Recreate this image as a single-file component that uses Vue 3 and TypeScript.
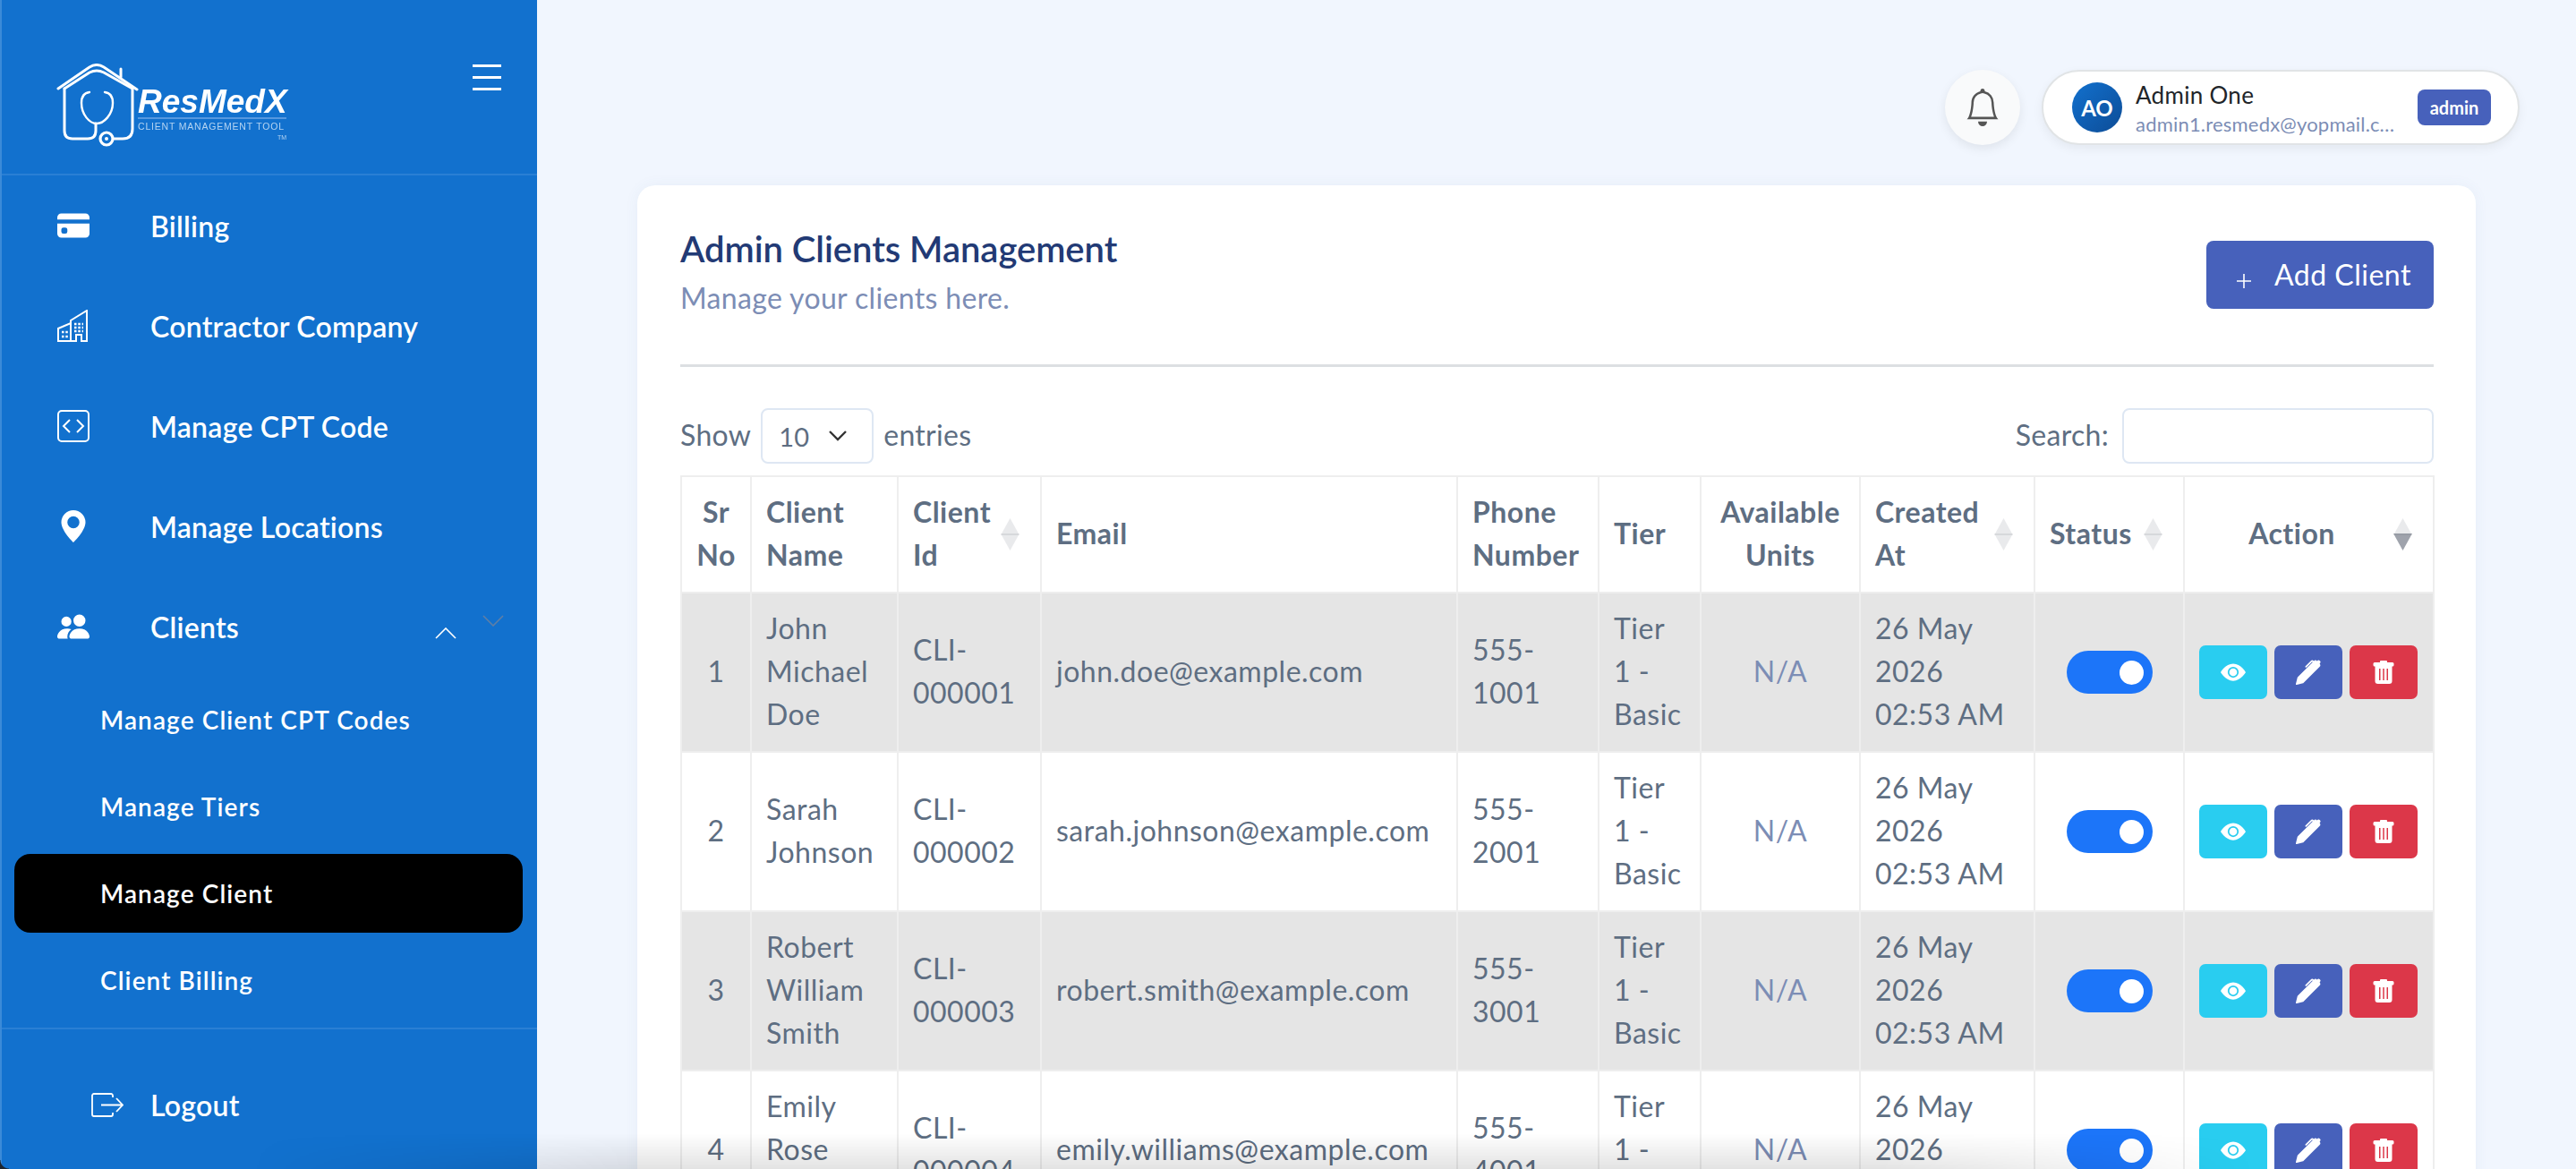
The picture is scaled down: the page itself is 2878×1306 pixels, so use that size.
<script setup lang="ts">
interface ClientRow {
  sr: number;
  name: string;
  id: string;
  email: string;
  phone: string;
}

const clients: ClientRow[] = [
  { sr: 1, name: 'John Michael Doe', id: 'CLI-000001', email: 'john.doe@example.com', phone: '555-1001' },
  { sr: 2, name: 'Sarah Johnson', id: 'CLI-000002', email: 'sarah.johnson@example.com', phone: '555-2001' },
  { sr: 3, name: 'Robert William Smith', id: 'CLI-000003', email: 'robert.smith@example.com', phone: '555-3001' },
  { sr: 4, name: 'Emily Rose Williams', id: 'CLI-000004', email: 'emily.williams@example.com', phone: '555-4001' },
];

const subItems = ['Manage Client CPT Codes', 'Manage Tiers', 'Manage Client', 'Client Billing'];
const columnWidths = [78, 164, 160, 465, 158, 114, 178, 195, 167, 279];
</script>

<template>
  <div class="page">
    <aside class="sidebar">
      <div class="brand">
        <svg class="logo" viewBox="0 0 270 104" width="270" height="104">
          <g fill="none" stroke="#fff" stroke-width="3" stroke-linecap="round" stroke-linejoin="round">
            <path d="M3 37 38 13q8-5 16 0l37 25" />
            <path d="M10 37 38 19q8-4 16 0l32 18" />
            <path d="M73 24V15" />
            <path d="M10 37v47q0 9 9 9h17q9 0 9-9V76" />
            <path d="M86 37v45q0 11-11 11H65" />
            <path d="M38 41Q29 42 29 53C29 66 38 76 46 76C54 76 64 66 64 53Q64 42 55 41" stroke-width="2.4" />
            <circle cx="57" cy="93" r="7" stroke-width="3.200" />
          </g>
          <circle cx="57" cy="93" r="2" fill="#fff" />
          <text x="92" y="64" class="logo-name">ResMedX</text>
          <path d="M92 70h166" stroke="#6ea6e4" stroke-width="1.5" />
          <text x="92" y="83" class="logo-sub">CLIENT MANAGEMENT TOOL</text>
          <text x="248" y="94" class="logo-tm">TM</text>
        </svg>
        <div class="hamburger"><span></span><span></span><span></span></div>
      </div>

      <nav class="menu">
        <a class="menu-item">
          <svg class="menu-icon" viewBox="0 0 16 16" width="36" height="36" fill="#fff">
            <path d="M0 4a2 2 0 0 1 2-2h12a2 2 0 0 1 2 2v1H0zm0 3v5a2 2 0 0 0 2 2h12a2 2 0 0 0 2-2V7zm3 2h1a1 1 0 0 1 1 1v1a1 1 0 0 1-1 1H3a1 1 0 0 1-1-1v-1a1 1 0 0 1 1-1" />
          </svg>
          Billing
        </a>
        <a class="menu-item">
          <svg class="menu-icon" viewBox="0 0 36 36" width="36" height="36" fill="none" stroke="#fff" stroke-width="2">
            <path d="M1 35V21l14-6V35z" />
            <path d="M15 35V12L33 1v34h-6v-7h-6v7z" />
            <path d="M5 25h7M5 30h7M19 16h10M19 20h10M19 24h10" stroke-width="2.5" stroke-dasharray="2.5 1.8" />
          </svg>
          Contractor Company
        </a>
        <a class="menu-item">
          <svg class="menu-icon" viewBox="0 0 36 36" width="36" height="36" fill="none" stroke="#fff" stroke-width="2">
            <rect x="1" y="1" width="34" height="34" rx="4" />
            <path d="M14 11l-7 7 7 7M22 11l7 7-7 7" />
          </svg>
          Manage CPT Code
        </a>
        <a class="menu-item">
          <svg class="menu-icon" viewBox="0 0 16 16" width="36" height="36" fill="#fff">
            <path d="M8 16s6-5.686 6-10A6 6 0 0 0 2 6c0 4.314 6 10 6 10m0-7a3 3 0 1 1 0-6 3 3 0 0 1 0 6" />
          </svg>
          Manage Locations
        </a>
        <a class="menu-item">
          <svg class="menu-icon" viewBox="0 0 16 16" width="36" height="36" fill="#fff">
            <path d="M7 14s-1 0-1-1 1-4 5-4 5 3 5 4-1 1-1 1zm4-6a3 3 0 1 0 0-6 3 3 0 0 0 0 6m-5.784 6A2.24 2.24 0 0 1 5 13c0-1.355.68-2.75 1.936-3.72A6.3 6.3 0 0 0 5 9c-4 0-5 3-5 4s1 1 1 1zM4.5 8a2.5 2.5 0 1 0 0-5 2.5 2.5 0 0 0 0 5" />
          </svg>
          Clients
          <svg class="chevron-up" viewBox="0 0 24 13" width="24" height="13" fill="none" stroke="#fff" stroke-width="1.6">
            <path d="M1 12 12 1l11 11" />
          </svg>
          <svg class="chevron-down" viewBox="0 0 24 13" width="24" height="13" fill="none" stroke="#5f7fa6" stroke-width="1.6">
            <path d="M1 1l11 11L23 1" />
          </svg>
        </a>
        <div class="submenu">
          <a v-for="item in subItems" :key="item" class="sub-item" :class="{ active: item === 'Manage Client' }">{{ item }}</a>
        </div>
      </nav>

      <div class="logout">
        <svg class="logout-icon" viewBox="0 0 36 27" width="36" height="27" fill="none" stroke="#fff" stroke-width="1.8">
          <path d="M24 5V3a2 2 0 0 0-2-2H3a2 2 0 0 0-2 2v21a2 2 0 0 0 2 2h19a2 2 0 0 0 2-2v-2" />
          <path d="M11 13.5h24M28 6l7 7.500-7 7.500" />
        </svg>
        Logout
      </div>
    </aside>

    <main class="main">
      <header class="topbar">
        <div class="bell">
          <svg viewBox="0 0 16 16" width="40" height="42" fill="#555" preserveAspectRatio="none">
            <path d="M8 16a2 2 0 0 0 2-2H6a2 2 0 0 0 2 2M8 1.918l-.797.161A4 4 0 0 0 4 6c0 .628-.134 2.197-.459 3.742-.16.767-.376 1.566-.663 2.258h10.244c-.287-.692-.502-1.49-.663-2.258C12.134 8.197 12 6.628 12 6a4 4 0 0 0-3.203-3.92zM14.22 12c.223.447.481.801.78 1H1c.299-.199.557-.553.78-1C2.68 10.2 3 6.88 3 6c0-2.42 1.72-4.44 4.005-4.901a1 1 0 1 1 1.99 0A5 5 0 0 1 13 6c0 .88.32 4.2 1.22 6" />
          </svg>
        </div>
        <div class="user-pill">
          <div class="avatar">AO</div>
          <div class="user-info">
            <div class="user-name">Admin One</div>
            <div class="user-email">admin1.resmedx@yopmail.com</div>
          </div>
          <span class="role-badge">admin</span>
        </div>
      </header>

      <section class="card">
        <div class="card-head">
          <div>
            <h1 class="card-title">Admin Clients Management</h1>
            <p class="card-sub">Manage your clients here.</p>
          </div>
          <button class="add-btn">
            <svg viewBox="0 0 16 16" width="16" height="16" fill="none" stroke="#fff" stroke-width="1.6">
              <path d="M8 0v16M0 8h16" />
            </svg>
            Add Client
          </button>
        </div>

        <div class="table-controls">
          <div class="entries">
            Show
            <div class="entries-select">
              10
              <svg viewBox="0 0 20 12" width="20" height="12" fill="none" stroke="#333" stroke-width="2.4">
                <path d="M1 1l9 9 9-9" />
              </svg>
            </div>
            entries
          </div>
          <label class="search">
            Search:
            <input type="text" />
          </label>
        </div>

        <table class="clients-table">
          <colgroup>
            <col v-for="(w, i) in columnWidths" :key="i" :style="{ width: w + 'px' }" />
          </colgroup>
          <thead>
            <tr>
              <th class="center">Sr No</th>
              <th>Client Name</th>
              <th class="sortable">Client Id<i class="sort"></i></th>
              <th>Email</th>
              <th>Phone Number</th>
              <th>Tier</th>
              <th class="center">Available Units</th>
              <th class="sortable">Created At<i class="sort"></i></th>
              <th class="sortable">Status<i class="sort"></i></th>
              <th class="sortable action-head">Action<i class="sort sort-desc"></i></th>
            </tr>
          </thead>
          <tbody>
            <tr v-for="c in clients" :key="c.sr">
              <td class="center">{{ c.sr }}</td>
              <td>{{ c.name }}</td>
              <td>{{ c.id }}</td>
              <td>{{ c.email }}</td>
              <td>{{ c.phone }}</td>
              <td>Tier 1 - Basic</td>
              <td class="center na">N/A</td>
              <td>26 May 2026 02:53 AM</td>
              <td class="control-cell">
                <div class="toggle"><span></span></div>
              </td>
              <td class="control-cell">
                <div class="actions">
                  <button class="act act-view">
                    <svg viewBox="0 0 16 16" width="28" height="28" fill="#fff">
                      <path d="M10.500 8a2.500 2.500 0 1 1-5 0 2.500 2.500 0 0 1 5 0" />
                      <path d="M0 8s3-5.500 8-5.500S16 8 16 8s-3 5.500-8 5.500S0 8 0 8m8 3.500a3.500 3.500 0 1 0 0-7 3.500 3.500 0 0 0 0 7" />
                    </svg>
                  </button>
                  <button class="act act-edit">
                    <svg viewBox="0 0 16 16" width="28" height="28" fill="#fff">
                      <path d="m13.498.795.149-.149a1.207 1.207 0 1 1 1.707 1.708l-.149.148a1.5 1.5 0 0 1-.059 2.059L4.854 14.854a.5.5 0 0 1-.233.131l-4 1a.5.5 0 0 1-.606-.606l1-4a.5.5 0 0 1 .131-.232l9.642-9.642a.5.5 0 0 0-.642.056L6.854 4.854a.5.5 0 1 1-.708-.708L9.440.854A1.500 1.500 0 0 1 11.500.796a1.500 1.500 0 0 1 1.998-.001" />
                    </svg>
                  </button>
                  <button class="act act-delete">
                    <svg viewBox="0 0 24 26" width="24" height="26" fill="#fff">
                      <path fill-rule="evenodd" d="M9 0h6a1 1 0 0 1 1 1v1h6a1.500 1.500 0 0 1 1.500 1.500V5a1.500 1.500 0 0 1-1.500 1.500h-.5V23a3 3 0 0 1-3 3H5.500a3 3 0 0 1-3-3V6.500H2A1.500 1.500 0 0 1 .5 5V3.500A1.500 1.500 0 0 1 2 2h6V1a1 1 0 0 1 1-1zM7 9v13h1.500V9zm4.250 0v13h1.500V9zM15.500 9v13H17V9z" />
                    </svg>
                  </button>
                </div>
              </td>
            </tr>
          </tbody>
        </table>
      </section>
    </main>

    <div class="bottom-shade"></div>
    <div class="window-corner"></div>
  </div>
</template>

<style scoped>
.page {
  position: relative;
  display: flex;
  height: 1306px;
  overflow: hidden;
  background: #f1f6fe;
  font-family: Lato, "Noto Sans", sans-serif;
  color: #5e6e82;
}

.sidebar {
  flex: 0 0 600px;
  box-sizing: border-box;
  display: flex;
  flex-direction: column;
  background: #1271ce;
  border-left: 2px solid #3b8ad8;
  color: #fff;
}

.brand {
  height: 196px;
  box-sizing: border-box;
  position: relative;
  padding: 62px 0 0 60px;
  border-bottom: 2px solid #2a7fd4;
}

.logo {
  display: block;
  filter: blur(0.4px);
}

.logo-name {
  font-family: "Liberation Sans", sans-serif;
  font-weight: 700;
  font-style: italic;
  font-size: 37px;
  fill: #fff;
}

.logo-sub {
  font-family: "Liberation Sans", sans-serif;
  font-size: 10.500px;
  letter-spacing: 0.8px;
  fill: #b5d4f2;
}

.logo-tm {
  font-family: "Liberation Sans", sans-serif;
  font-size: 7px;
  fill: #b5d4f2;
}

.hamburger {
  position: absolute;
  top: 72px;
  right: 40px;
  width: 32px;
  display: flex;
  flex-direction: column;
  gap: 10px;
}

.hamburger span {
  display: block;
  height: 3px;
  background: #fff;
}

.menu-item {
  position: relative;
  height: 112px;
  display: flex;
  align-items: center;
  padding-left: 62px;
  font-size: 32px;
  font-weight: 600;
  letter-spacing: 0.25px;
}

.menu-icon {
  margin-right: 68px;
  flex: none;
}

.chevron-up {
  position: absolute;
  left: 484px;
  top: 57px;
}

.chevron-down {
  position: absolute;
  left: 537px;
  top: 43px;
}

.submenu {
  display: flex;
  flex-direction: column;
  padding-bottom: 4px;
  border-bottom: 2px solid #2a7fd4;
}

.sub-item {
  height: 88px;
  margin: 4px 16px 5px 14px;
  padding-left: 96px;
  display: flex;
  align-items: center;
  font-size: 28px;
  font-weight: 600;
  letter-spacing: 1.1px;
  border-radius: 18px;
}

.sub-item.active {
  background: #000;
}

.logout {
  display: flex;
  align-items: center;
  padding: 65px 0 0 100px;
  font-size: 32px;
  font-weight: 600;
  letter-spacing: 0.25px;
}

.logout-icon {
  margin-right: 30px;
}

.main {
  flex: 1;
  min-width: 0;
}

.topbar {
  display: flex;
  justify-content: flex-end;
  gap: 24px;
  padding: 78px 63px 0 0;
}

.bell {
  width: 84px;
  height: 84px;
  display: flex;
  align-items: center;
  justify-content: center;
  border-radius: 50%;
  background: #f9fafb;
  box-shadow: 0 4px 12px rgba(0, 0, 0, 0.08);
}

.user-pill {
  width: 534px;
  height: 84px;
  box-sizing: border-box;
  display: flex;
  align-items: center;
  padding: 0 32px;
  background: #fff;
  border: 2px solid #e1e4e6;
  border-radius: 42px;
  box-shadow: 0 4px 12px rgba(0, 0, 0, 0.06);
}

.avatar {
  flex: none;
  width: 56px;
  height: 56px;
  display: flex;
  align-items: center;
  justify-content: center;
  border-radius: 50%;
  background: linear-gradient(135deg, #1271ce, #0d4c96);
  color: #fff;
  font-size: 24px;
  font-weight: 700;
}

.user-info {
  width: 292px;
  margin-left: 15px;
}

.user-name {
  padding-top: 2px;
  font-size: 26px;
  line-height: 35px;
  letter-spacing: 0.3px;
  color: #212529;
}

.user-email {
  font-size: 22px;
  line-height: 29px;
  letter-spacing: 0.2px;
  color: #7c8db5;
  white-space: nowrap;
  overflow: hidden;
  text-overflow: ellipsis;
}

.role-badge {
  margin-left: 23px;
  flex: none;
  width: 82px;
  height: 40px;
  display: flex;
  align-items: center;
  justify-content: center;
  border-radius: 8px;
  background: #4761bb;
  color: #fff;
  font-size: 20px;
  font-weight: 700;
}

.card {
  margin: 45px 112px 0;
  padding: 47px 47px 0 48px;
  background: #fff;
  border-radius: 20px;
  box-shadow: 0 0 16px rgba(70, 100, 160, 0.06);
}

.card-head {
  display: flex;
  justify-content: space-between;
  align-items: flex-start;
  padding-bottom: 50px;
  border-bottom: 3px solid #dcdfe2;
}

.card-title {
  margin: 0 0 7px;
  font-size: 40px;
  line-height: 48px;
  font-weight: 600;
  letter-spacing: -0.05px;
  color: #223a75;
}

.card-sub {
  margin: 0;
  font-size: 32px;
  line-height: 48px;
  letter-spacing: 0.35px;
  color: #7c8db5;
}

.add-btn {
  margin-top: 15px;
  width: 254px;
  height: 76px;
  display: flex;
  align-items: center;
  gap: 26px;
  padding: 0 0 0 34px;
  border: none;
  border-radius: 8px;
  background: #4761bb;
  color: #fff;
  font: inherit;
  font-size: 32px;
  line-height: 44px;
  letter-spacing: 0.5px;
}

.add-btn svg {
  margin-top: 14px;
}

.table-controls {
  display: flex;
  justify-content: space-between;
  align-items: center;
  margin: 42px 0 13px;
  font-size: 32px;
  letter-spacing: 0.3px;
}

.entries,
.search {
  display: flex;
  align-items: center;
  gap: 11px;
}

.entries-select {
  width: 126px;
  height: 62px;
  margin-top: 4px;
  box-sizing: border-box;
  display: flex;
  align-items: center;
  justify-content: space-between;
  padding: 0 28px 0 18px;
  border: 2px solid #dee7f3;
  border-radius: 8px;
  font-size: 29px;
}

.search {
  gap: 15px;
}

.search input {
  width: 348px;
  height: 62px;
  margin-top: 4px;
  box-sizing: border-box;
  border: 2px solid #dee7f3;
  border-radius: 8px;
  background: #fff;
}

.clients-table {
  width: 1958px;
  table-layout: fixed;
  border-collapse: collapse;
  font-size: 32px;
  line-height: 48px;
  letter-spacing: 0.5px;
}

.clients-table th,
.clients-table td {
  padding: 15px 16px 17px;
  border: 2px solid #eeeeee;
  text-align: left;
  vertical-align: middle;
}

.clients-table .control-cell {
  padding: 16px;
}

.clients-table th {
  position: relative;
  font-weight: 700;
  letter-spacing: 0.5px;
  background: #fff;
}

.clients-table tbody tr:nth-child(odd) td {
  background: #e5e5e5;
}

.clients-table tbody tr:nth-child(even) td {
  background: #fff;
}

.clients-table .center {
  text-align: center;
}

.clients-table .na {
  color: #7c8db5;
}

.clients-table .sortable {
  padding-right: 38px;
}

.clients-table .action-head {
  padding-right: 54px;
  text-align: center;
}

.sort {
  position: absolute;
  right: 23px;
  top: 50%;
  width: 21px;
  height: 36px;
  margin-top: -18px;
}

.sort::before,
.sort::after {
  content: "";
  position: absolute;
  left: 0;
  width: 21px;
  height: 19px;
  background: rgba(107, 114, 128, 0.15);
}

.sort::before {
  top: 0;
  clip-path: polygon(50% 0, 100% 100%, 0 100%);
}

.sort::after {
  bottom: 0;
  clip-path: polygon(0 0, 100% 0, 50% 100%);
}

.sort-desc::after {
  background: rgba(107, 114, 128, 0.65);
}

.toggle {
  width: 96px;
  height: 48px;
  margin: 0 auto;
  display: flex;
  align-items: center;
  justify-content: flex-end;
  padding-right: 10px;
  box-sizing: border-box;
  border-radius: 24px;
  background: #1c75f9;
}

.toggle span {
  width: 27px;
  height: 27px;
  border-radius: 50%;
  background: #fff;
}

.actions {
  display: flex;
  gap: 8px;
}

.act {
  flex: none;
  width: 76px;
  height: 60px;
  display: flex;
  align-items: center;
  justify-content: center;
  padding: 0;
  border: none;
  border-radius: 7px;
}

.act-view {
  background: #29cdf0;
}

.act-edit {
  background: #4761bb;
}

.act-delete {
  background: #dc3749;
}

.bottom-shade {
  position: absolute;
  left: 0;
  right: 0;
  bottom: 0;
  height: 40px;
  pointer-events: none;
  background: linear-gradient(to bottom, rgba(0, 0, 0, 0), rgba(0, 0, 0, 0.11));
  mask-image: linear-gradient(to right, transparent 280px, #000 700px, #000 2100px, transparent 2520px);
}

.window-corner {
  position: absolute;
  left: 0;
  bottom: 0;
  width: 10px;
  height: 10px;
  background: radial-gradient(circle at 100% 0, transparent 9px, #1c2530 10px);
}
</style>
